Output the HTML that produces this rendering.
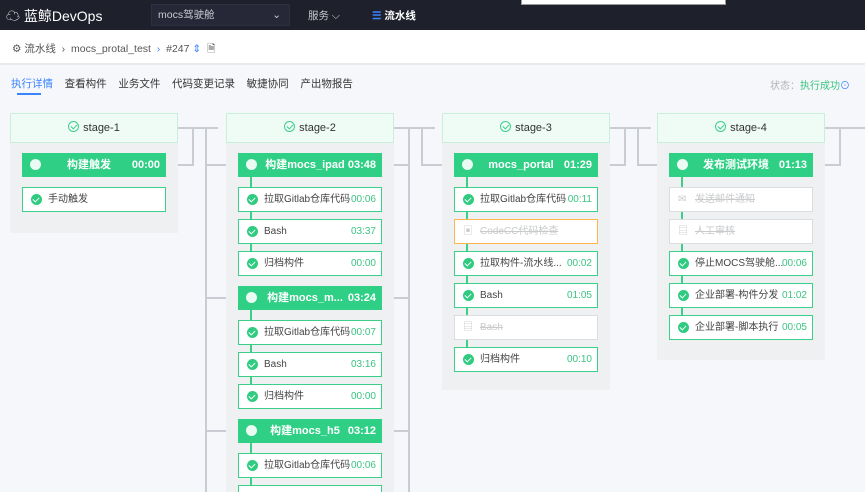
<!DOCTYPE html><html style="width:865px;height:492px;overflow:hidden"><head><meta charset="utf-8"><style>
*{margin:0;padding:0;box-sizing:border-box}
body{width:865px;height:492px;overflow:hidden;background:#f6f7fa;font-family:"Liberation Sans","Noto Sans CJK SC",sans-serif;position:relative;font-size:11px;color:#333}
.a{position:absolute}
.hd{left:0;top:0;width:865px;height:30px;background:#1e202b}
.crumb{left:0;top:30px;width:865px;height:35px;background:#fff;border-bottom:2px solid #e8eaee}
.sh{height:30px;width:168px;background:#effbf5;border:1px solid #c8eedc;text-align:center;line-height:28px;font-size:11px;color:#333}
.sb{width:168px;background:#eef0f2}
.job{width:144px;height:24px;background:#2fd085;color:#fff;font-weight:bold;line-height:24px;font-size:11px}
.job .c{position:absolute;left:8px;top:6px;width:11px;height:11px;border-radius:50%;background:#fff;opacity:.9}
.job .n{position:absolute;left:24px;width:86px;text-align:center;white-space:nowrap}
.job .tm{position:absolute;right:6px}
.t{width:144px;height:25px;background:#fff;border:1px solid #3ccf8a;line-height:23px;font-size:10px}
.t .c{position:absolute;left:8px;top:6px;width:11px;height:11px;border-radius:50%;background:#2fcb80}
.t .c:after{content:"";position:absolute;left:3px;top:2px;width:3px;height:5px;border:solid #fff;border-width:0 1.5px 1.5px 0;transform:rotate(45deg)}
.t .n{position:absolute;left:25px;white-space:nowrap;color:#444}
.t .tm{position:absolute;right:5px;color:#3ac483}
.t.g{border-color:#dcdde0}.t.g .n{color:#c8cacc;text-decoration:line-through}
.t.o{border-color:#ffb74d}.t.o .n{color:#c8cacc;text-decoration:line-through}
.ln{background:#c9ccd2}
.vl{width:2px;background:#3ccf8a}
.ck{display:inline-block;width:11px;height:11px;border:1px solid #3ccf8a;border-radius:50%;vertical-align:-1px;margin-right:4px;position:relative}
.ck:after{content:"";position:absolute;left:3px;top:1px;width:3px;height:5px;border:solid #3ccf8a;border-width:0 1px 1px 0;transform:rotate(45deg)}
</style></head><body>
<div class="a hd"></div>
<div class="a" style="left:6px;top:6px;color:#fff;font-size:14px">☁ 蓝鲸DevOps</div>
<div class="a" style="left:151px;top:4px;width:139px;height:22px;background:#262838;border:1px solid #2d3040;color:#c8cad0;font-size:10.5px;line-height:20px;padding-left:6px">mocs驾驶舱<span style="position:absolute;right:8px">⌄</span></div>
<div class="a" style="left:308px;top:8px;color:#c8cad0;font-size:10.5px">服务 ⌵</div>
<div class="a" style="left:372px;top:8px;color:#fff;font-size:10.5px;font-weight:bold"><span style="color:#3a84ff">☰</span> 流水线</div>
<div class="a" style="left:521px;top:0;width:205px;height:5px;background:#fff;border:1px solid #999;border-top:0"></div>
<div class="a crumb"></div>
<div class="a" style="left:12px;top:41px;font-size:10.5px;color:#555">⚙ 流水线 &nbsp;›&nbsp; mocs_protal_test &nbsp;<span style="color:#3a84ff">›</span>&nbsp; #247 <span style="color:#3a84ff">⇕</span> &nbsp;🗎</div>
<div class="a" style="left:11px;top:76px;font-size:10.5px;color:#333"><span style="color:#3a84ff">执行详情</span>&nbsp;&nbsp;&nbsp;&nbsp;查看构件&nbsp;&nbsp;&nbsp;&nbsp;业务文件&nbsp;&nbsp;&nbsp;&nbsp;代码变更记录&nbsp;&nbsp;&nbsp;&nbsp;敏捷协同&nbsp;&nbsp;&nbsp;&nbsp;产出物报告</div>
<div class="a" style="left:17px;top:93px;width:24px;height:2px;background:#3a84ff"></div>
<div class="a" style="left:770px;top:77px;font-size:10px;color:#b0b3b8">状态：<span style="color:#3ac483">执行成功</span><span style="color:#3a84ff">⊙</span></div>

<div class="a ln" style="left:178px;top:127px;width:40px;height:2px"></div>
<div class="a ln" style="left:393px;top:127px;width:42px;height:2px"></div>
<div class="a ln" style="left:609px;top:127px;width:42px;height:2px"></div>
<div class="a ln" style="left:825px;top:127px;width:40px;height:2px"></div>
<div class="a ln" style="left:192px;top:127px;width:2px;height:38px"></div>
<div class="a ln" style="left:166px;top:164px;width:28px;height:2px"></div>
<div class="a ln" style="left:205px;top:127px;width:2px;height:365px"></div>
<div class="a ln" style="left:205px;top:164px;width:33px;height:2px"></div>
<div class="a ln" style="left:205px;top:297px;width:33px;height:2px"></div>
<div class="a ln" style="left:205px;top:430px;width:33px;height:2px"></div>
<div class="a ln" style="left:408px;top:127px;width:2px;height:365px"></div>
<div class="a ln" style="left:382px;top:164px;width:28px;height:2px"></div>
<div class="a ln" style="left:382px;top:297px;width:28px;height:2px"></div>
<div class="a ln" style="left:382px;top:430px;width:28px;height:2px"></div>
<div class="a ln" style="left:421px;top:127px;width:2px;height:39px"></div>
<div class="a ln" style="left:421px;top:164px;width:33px;height:2px"></div>
<div class="a ln" style="left:624px;top:127px;width:2px;height:39px"></div>
<div class="a ln" style="left:597px;top:164px;width:29px;height:2px"></div>
<div class="a ln" style="left:637px;top:127px;width:2px;height:39px"></div>
<div class="a ln" style="left:637px;top:164px;width:32px;height:2px"></div>
<div class="a ln" style="left:839px;top:127px;width:2px;height:39px"></div>
<div class="a ln" style="left:812px;top:164px;width:29px;height:2px"></div>

<div class="a sb" style="left:10px;top:143px;height:90px"></div>
<div class="a sh" style="left:10px;top:113px"><span class="ck"></span>stage-1</div>
<div class="a job" style="left:22px;top:153px"><span class="c"></span><span class="n">构建触发</span><span class="tm">00:00</span></div>
<div class="a t" style="left:22px;top:187px"><span class="c"></span><span class="n">手动触发</span></div>

<div class="a sb" style="left:226px;top:143px;height:349px"></div>
<div class="a sh" style="left:226px;top:113px"><span class="ck"></span>stage-2</div>
<div class="a vl" style="left:250px;top:177px;height:90px"></div>
<div class="a vl" style="left:250px;top:310px;height:90px"></div>
<div class="a vl" style="left:250px;top:443px;height:49px"></div>
<div class="a job" style="left:238px;top:153px"><span class="c"></span><span class="n">构建mocs_ipad</span><span class="tm">03:48</span></div>
<div class="a t" style="left:238px;top:187px"><span class="c"></span><span class="n">拉取Gitlab仓库代码</span><span class="tm">00:06</span></div>
<div class="a t" style="left:238px;top:219px"><span class="c"></span><span class="n">Bash</span><span class="tm">03:37</span></div>
<div class="a t" style="left:238px;top:251px"><span class="c"></span><span class="n">归档构件</span><span class="tm">00:00</span></div>
<div class="a job" style="left:238px;top:286px"><span class="c"></span><span class="n">构建mocs_m...</span><span class="tm">03:24</span></div>
<div class="a t" style="left:238px;top:320px"><span class="c"></span><span class="n">拉取Gitlab仓库代码</span><span class="tm">00:07</span></div>
<div class="a t" style="left:238px;top:352px"><span class="c"></span><span class="n">Bash</span><span class="tm">03:16</span></div>
<div class="a t" style="left:238px;top:384px"><span class="c"></span><span class="n">归档构件</span><span class="tm">00:00</span></div>
<div class="a job" style="left:238px;top:419px"><span class="c"></span><span class="n">构建mocs_h5</span><span class="tm">03:12</span></div>
<div class="a t" style="left:238px;top:453px"><span class="c"></span><span class="n">拉取Gitlab仓库代码</span><span class="tm">00:06</span></div>
<div class="a t" style="left:238px;top:485px"></div>

<div class="a sb" style="left:442px;top:143px;height:247px"></div>
<div class="a sh" style="left:442px;top:113px"><span class="ck"></span>stage-3</div>
<div class="a vl" style="left:466px;top:177px;height:180px"></div>
<div class="a job" style="left:454px;top:153px"><span class="c"></span><span class="n">mocs_portal</span><span class="tm">01:29</span></div>
<div class="a t" style="left:454px;top:187px"><span class="c"></span><span class="n">拉取Gitlab仓库代码</span><span class="tm">00:11</span></div>
<div class="a t o" style="left:454px;top:219px"><span class="n" style="left:8px;text-decoration:none">▣</span><span class="n">CodeCC代码检查</span></div>
<div class="a t" style="left:454px;top:251px"><span class="c"></span><span class="n">拉取构件-流水线...</span><span class="tm">00:02</span></div>
<div class="a t" style="left:454px;top:283px"><span class="c"></span><span class="n">Bash</span><span class="tm">01:05</span></div>
<div class="a t g" style="left:454px;top:315px"><span class="n" style="left:8px;text-decoration:none">▤</span><span class="n">Bash</span></div>
<div class="a t" style="left:454px;top:347px"><span class="c"></span><span class="n">归档构件</span><span class="tm">00:10</span></div>

<div class="a sb" style="left:657px;top:143px;height:217px"></div>
<div class="a sh" style="left:657px;top:113px"><span class="ck"></span>stage-4</div>
<div class="a vl" style="left:681px;top:177px;height:145px"></div>
<div class="a job" style="left:669px;top:153px"><span class="c"></span><span class="n">发布测试环境</span><span class="tm">01:13</span></div>
<div class="a t g" style="left:669px;top:187px"><span class="n" style="left:8px;text-decoration:none">✉</span><span class="n">发送邮件通知</span></div>
<div class="a t g" style="left:669px;top:219px"><span class="n" style="left:8px;text-decoration:none">▤</span><span class="n">人工审核</span></div>
<div class="a t" style="left:669px;top:251px"><span class="c"></span><span class="n">停止MOCS驾驶舱...</span><span class="tm">00:06</span></div>
<div class="a t" style="left:669px;top:283px"><span class="c"></span><span class="n">企业部署-构件分发</span><span class="tm">01:02</span></div>
<div class="a t" style="left:669px;top:315px"><span class="c"></span><span class="n">企业部署-脚本执行</span><span class="tm">00:05</span></div>
</body></html>
